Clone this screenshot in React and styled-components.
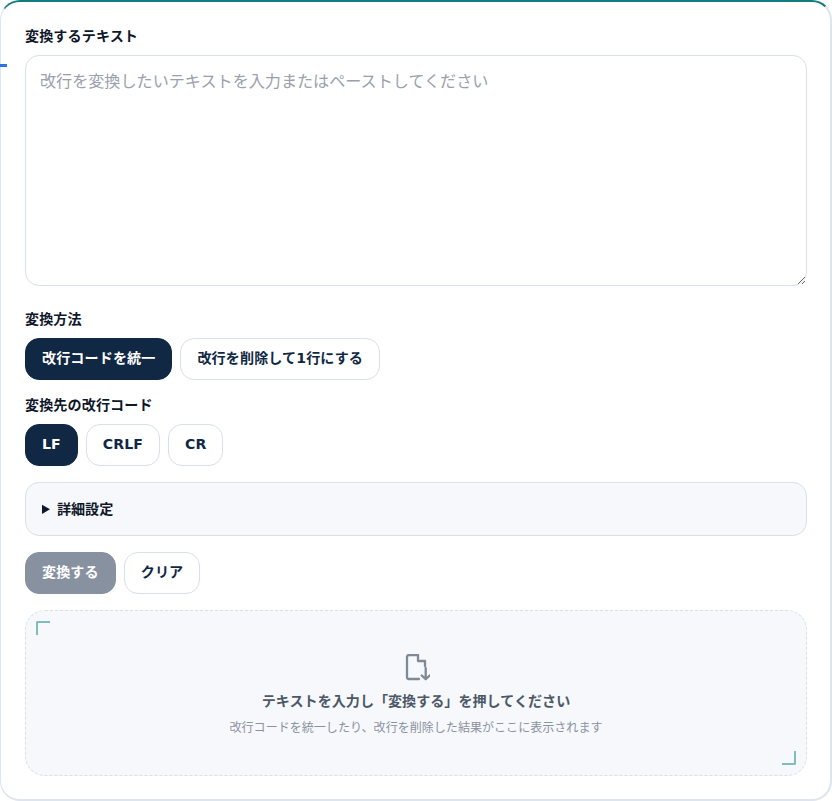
import React from "react";
import styled, { createGlobalStyle } from "styled-components";

const GlobalStyle = createGlobalStyle`
  html, body { margin: 0; padding: 0; background: #fff; }
  body { font-family: "DejaVu Sans", "Noto Sans CJK JP", sans-serif; color: #0f172a; }
  * { box-sizing: border-box; }
`;

const App = () => {
  return (
    <Page>
      <GlobalStyle />
      <Card>
        <AccentTick />
        <Label>変換するテキスト</Label>
        <TextBox placeholder="改行を変換したいテキストを入力またはペーストしてください" />

        <SectionLabel>変換方法</SectionLabel>
        <ButtonRow>
          <Pill $active>改行コードを統一</Pill>
          <Pill>改行を削除して1行にする</Pill>
        </ButtonRow>

        <SectionLabelTight>変換先の改行コード</SectionLabelTight>
        <ButtonRow>
          <Pill $active>LF</Pill>
          <Pill>CRLF</Pill>
          <Pill>CR</Pill>
        </ButtonRow>

        <Details>
          <summary>詳細設定</summary>
        </Details>

        <ActionRow>
          <Pill $disabled disabled>変換する</Pill>
          <Pill>クリア</Pill>
        </ActionRow>

        <ResultBox>
          <Corner $pos="tl" />
          <Corner $pos="br" />
          <FileIcon viewBox="-2 1 28 28" fill="none" stroke="#808997" strokeWidth="2.3" strokeLinecap="round" strokeLinejoin="round">
            <path d="M14 2H5a2 2 0 0 0-2 2v20a2 2 0 0 0 2 2h10" />
            <path d="M14 2v6h7v5" />
            <path d="M21.7 15v11M17.7 22.5l4 3.7 4-3.7" />
          </FileIcon>
          <ResultTitle>テキストを入力し「変換する」を押してください</ResultTitle>
          <ResultHint>改行コードを統一したり、改行を削除した結果がここに表示されます</ResultHint>
        </ResultBox>
      </Card>
    </Page>
  );
};
export default App;

// CSS STYLED COMPONENTS =>
const Page = styled.div`
  width: 832px;
  height: 801px;
  overflow: hidden;
`;
const Card = styled.div`
  position: relative;
  width: 832px;
  height: 801px;
  padding: 26px 24px 0 24px;
  background: #fff;
  border-radius: 20px;
  border: 2px solid #dde5ee;
  border-top: 2px solid #0f7c80;
  border-left-width: 1.5px;
`;
const AccentTick = styled.div`
  position: absolute;
  left: -2px;
  top: 62px;
  width: 8px;
  height: 3px;
  background: #2f6fed;
`;
const Label = styled.div`
  font-size: 14.08px;
  font-weight: 700;
  line-height: 16px;
  letter-spacing: 0.1px;
  margin-bottom: 11px;
`;
const SectionLabel = styled(Label)`
  margin-top: 25px;
  margin-bottom: 11px;
`;
const SectionLabelTight = styled(Label)`
  margin-top: 17.5px;
  margin-bottom: 11px;
`;
const TextBox = styled.textarea`
  display: block;
  width: 782px;
  height: 231px;
  padding: 14px 14px;
  border: 1px solid #d8e0ea;
  border-radius: 14px;
  background: #fff;
  font-family: inherit;
  font-size: 16.1px;
  line-height: 24px;
  outline: none;
  resize: vertical;
  &::placeholder { color: #9aa1ac; }
`;
const ButtonRow = styled.div`
  display: flex;
  gap: 8px;
`;
const ActionRow = styled(ButtonRow)`
  margin-top: 16px;
`;
const Pill = styled.button`
  height: 41.5px;
  padding: 0 16px;
  border-radius: 14px;
  border: 1px solid ${(p) => (p.$active ? "#102844" : p.$disabled ? "#8791a0" : "#d8e0ea")};
  background: ${(p) => (p.$active ? "#102844" : p.$disabled ? "#8791a0" : "#fff")};
  color: ${(p) => (p.$active || p.$disabled ? "#fff" : "#102844")};
  font-family: inherit;
  font-size: 14.08px;
  font-weight: 700;
  line-height: 1.5;
  letter-spacing: 0.1px;
`;
const Details = styled.details`
  margin-top: 16.5px;
  width: 782px;
  height: 54px;
  padding: 0 16px;
  border: 1px solid #d8e0ea;
  border-radius: 14px;
  background: #f6f8fc;
  summary {
    font-size: 14.08px;
    font-weight: 700;
    line-height: 52px;
  }
`;
const ResultBox = styled.div`
  position: relative;
  display: flex;
  flex-direction: column;
  align-items: center;
  margin-top: 16.5px;
  width: 782px;
  height: 166px;
  padding-top: 43px;
  border: 1px dashed #d8e0ea;
  border-radius: 20px;
  background: #f6f8fc;
`;
const Corner = styled.span`
  position: absolute;
  width: 14px;
  height: 14px;
  border: 0 solid #7fbcc2;
  ${(p) =>
    p.$pos === "tl"
      ? "left: 10px; top: 10px; border-top-width: 2px; border-left-width: 2px; border-top-left-radius: 2px;"
      : "right: 10px; bottom: 10px; border-bottom-width: 2px; border-right-width: 2px; border-bottom-right-radius: 2px;"}
`;
const FileIcon = styled.svg`
  width: 28px;
  height: 28px;
`;
const ResultTitle = styled.div`
  margin-top: 10px;
  font-size: 14.08px;
  font-weight: 700;
  line-height: 18px;
  color: #4d5867;
`;
const ResultHint = styled.div`
  margin-top: 10px;
  font-size: 12.05px;
  line-height: 17px;
  color: #8a929e;
`;
